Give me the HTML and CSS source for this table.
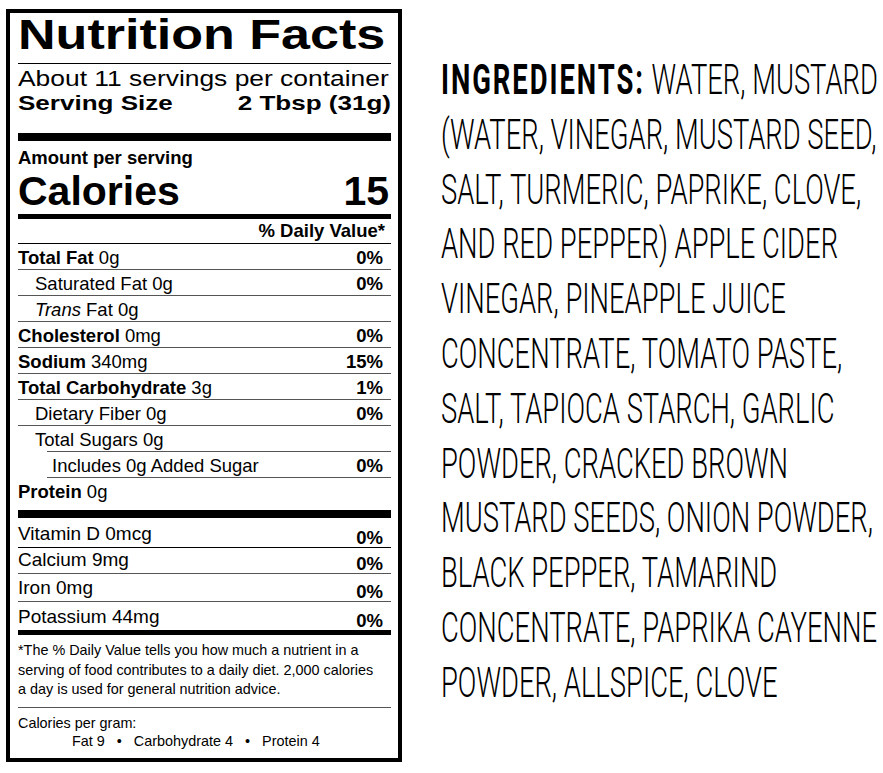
FILE: index.html
```html
<!DOCTYPE html>
<html lang="en">
<head>
<meta charset="utf-8">
<title>Nutrition Facts</title>
<link rel="stylesheet" href="styles.css">
</head>
<body>
<div class="page">
  <section class="label">
    <div class="head">
      <h1 class="title">Nutrition Facts</h1>
      <p class="servings">About 11 servings per container</p>
      <p class="serving-size"><span>Serving Size</span><span>2 Tbsp (31g)</span></p>
    </div>
    <div class="bar bar-thick"></div>
    <p class="amount">Amount per serving</p>
    <p class="calories"><span>Calories</span><span>15</span></p>
    <div class="bar bar-mid"></div>
    <p class="dv-head">% Daily Value*</p>
    <ul class="nutrients">
      <li class="row"><span><b>Total Fat</b> 0g</span><b>0%</b></li>
      <li class="row sub"><span>Saturated Fat 0g</span><b>0%</b></li>
      <li class="row sub"><span><i>Trans</i> Fat 0g</span></li>
      <li class="row"><span><b>Cholesterol</b> 0mg</span><b>0%</b></li>
      <li class="row"><span><b>Sodium</b> 340mg</span><b>15%</b></li>
      <li class="row"><span><b>Total Carbohydrate</b> 3g</span><b>1%</b></li>
      <li class="row sub"><span>Dietary Fiber 0g</span><b>0%</b></li>
      <li class="row sub open"><span>Total Sugars 0g</span></li>
      <li class="row added"><span>Includes 0g Added Sugar</span><b>0%</b></li>
      <li class="row open"><span><b>Protein</b> 0g</span></li>
    </ul>
    <div class="bar bar-thick2"></div>
    <ul class="vitamins">
      <li class="vrow"><span class="vname">Vitamin D 0mcg</span><b class="vpct">0%</b></li>
      <li class="vrow"><span class="vname">Calcium 9mg</span><b class="vpct">0%</b></li>
      <li class="vrow"><span class="vname">Iron 0mg</span><b class="vpct">0%</b></li>
      <li class="vrow"><span class="vname">Potassium 44mg</span><b class="vpct">0%</b></li>
    </ul>
    <div class="bar bar-mid2"></div>
    <p class="footnote">*The % Daily Value tells you how much a nutrient in a<br>serving of food contributes to a daily diet. 2,000 calories<br>a day is used for general nutrition advice.</p>
    <div class="per-gram">
      <p class="pg-title">Calories per gram:</p>
      <p class="macros"><span>Fat 9</span><span class="dot">•</span><span>Carbohydrate 4</span><span class="dot">•</span><span>Protein 4</span></p>
    </div>
  </section>
  <section class="ingredients">
    <p class="ing-text"><b>INGREDIENTS:</b> WATER, MUSTARD<br>(WATER, VINEGAR, MUSTARD SEED,<br>SALT, TURMERIC, PAPRIKE, CLOVE,<br>AND RED PEPPER) APPLE CIDER<br>VINEGAR, PINEAPPLE JUICE<br>CONCENTRATE, TOMATO PASTE,<br>SALT, TAPIOCA STARCH, GARLIC<br>POWDER, CRACKED BROWN<br>MUSTARD SEEDS, ONION POWDER,<br>BLACK PEPPER, TAMARIND<br>CONCENTRATE, PAPRIKA CAYENNE<br>POWDER, ALLSPICE, CLOVE</p>
  </section>
</div>
</body>
</html>
```

FILE: styles.css
```css
html, body {
  margin: 0;
  padding: 0;
  background: #fff;
  overflow: hidden;
}

body {
  font-family: "Liberation Sans", Arial, Helvetica, sans-serif;
  color: #000;
}

.page {
  display: flex;
  align-items: flex-start;
  padding: 9px 0 0 6px;
  gap: 39px;
}

/* ---------- Nutrition label ---------- */
.label {
  flex: none;
  width: 396px;
  box-sizing: border-box;
  border: 4px solid #000;
  padding: 0 7px 3px 8px;
}

.label p {
  margin: 0;
}

.head {
  width: 301px;
  transform: scaleX(1.2392);
  transform-origin: 0 0;
}

.title {
  margin: 0;
  font-size: 42px;
  font-weight: 700;
  line-height: 44px;
  padding-bottom: 6px;
  border-bottom: 1px solid #000;
  white-space: nowrap;
}

.servings {
  padding-top: 3px;
  font-size: 21.3px;
  line-height: 24px;
  white-space: nowrap;
}

.serving-size {
  display: flex;
  justify-content: space-between;
  font-size: 21px;
  font-weight: 700;
  line-height: 24px;
}

.bar {
  background: #000;
}

.bar-thick {
  height: 8px;
  margin-top: 18px;
}

.amount {
  margin-top: 7px !important;
  font-size: 18.5px;
  font-weight: 700;
  line-height: 20px;
}

.calories {
  display: flex;
  justify-content: space-between;
  margin-top: 3px !important;
  padding-right: 2px;
  font-size: 41px;
  font-weight: 700;
  line-height: 40px;
}

.bar-mid {
  height: 5px;
  margin-top: 3px;
}

.dv-head {
  text-align: right;
  font-size: 18.5px;
  font-weight: 700;
  line-height: 24px;
  padding-right: 6px;
  border-bottom: 1px solid #000;
}

.nutrients,
.vitamins {
  list-style: none;
  margin: 0;
  padding: 0;
}

.row {
  display: flex;
  justify-content: space-between;
  box-sizing: border-box;
  height: 26px;
  padding: 3px 8px 0 0;
  font-size: 18.5px;
  line-height: 22px;
  border-bottom: 1px solid #555;
  white-space: nowrap;
}

.row.sub {
  padding-left: 17px;
}

.row.open {
  border-bottom: none;
  height: 25px;
}

.row.added {
  height: 27px;
  margin-left: 29px;
  padding-left: 5px;
  border-top: 1px solid #555;
}

.bar-thick2 {
  height: 8px;
  margin-top: 7px;
}

.vrow {
  display: flex;
  justify-content: space-between;
  align-items: flex-end;
  box-sizing: border-box;
  height: 28px;
  padding-right: 8px;
  font-size: 19px;
  border-bottom: 1px solid #555;
}

.vrow:first-child {
  height: 30px;
  border-bottom-color: #000;
}

.vrow:nth-child(2) {
  height: 26px;
}

.vrow:last-child {
  border-bottom: none;
}

.vname {
  line-height: 18px;
  padding-bottom: 4px;
}

.vpct {
  font-size: 18.5px;
  line-height: 18px;
}

.bar-mid2 {
  height: 5px;
}

.footnote {
  padding: 6px 0 7px;
  font-size: 14.4px;
  line-height: 19.5px;
  border-bottom: 1px solid #555;
  white-space: nowrap;
}

.per-gram {
  padding: 6px 0 4px;
  font-size: 14.4px;
  line-height: 18.5px;
}

.macros {
  padding-left: 54px;
}

.dot {
  margin: 0 12px;
}

/* ---------- Ingredients ---------- */
.ingredients {
  flex: 1;
  min-width: 0;
  padding-top: 44px;
}

.ing-text {
  margin: 0;
  width: max-content;
  font-family: Roboto, "Liberation Sans", sans-serif;
  font-weight: 300;
  font-size: 42px;
  line-height: 54.8px;
  white-space: nowrap;
  transform: scaleX(0.652);
  transform-origin: 0 0;
}

.ing-text b {
  font-weight: 700;
  letter-spacing: 3px;
}
```
